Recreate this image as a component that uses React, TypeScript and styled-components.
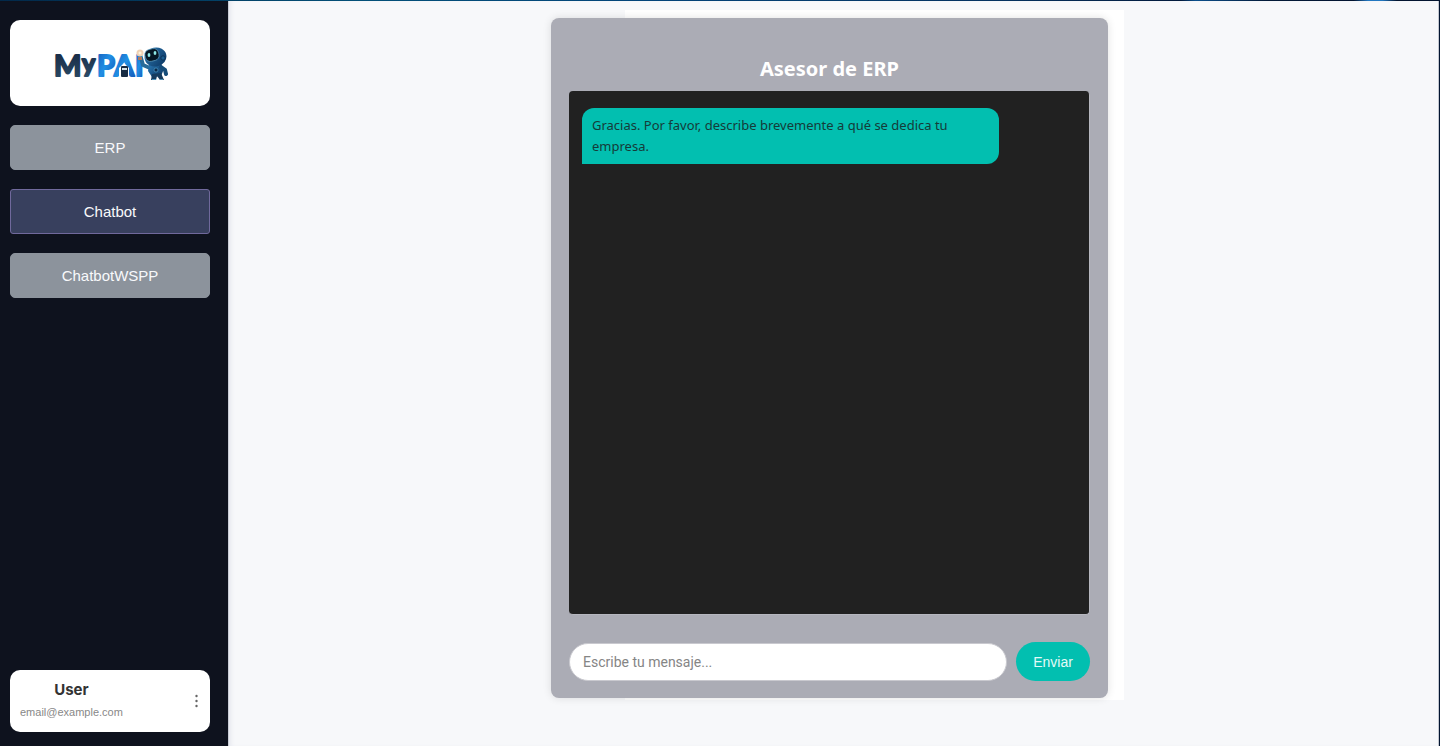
import React, { useState } from "react";
import styled, { createGlobalStyle, css } from "styled-components";

const GlobalStyle = createGlobalStyle`
  *, *::before, *::after { box-sizing: border-box; }
  html, body, #root { height: 100%; }
  body {
    margin: 0;
    background: #021a36;
    font-family: "Liberation Sans", Arial, sans-serif;
  }
`;

const Shell = styled.div`
  display: flex;
  min-height: 100%;
  padding: 1px 1px 0 0;
  background: linear-gradient(
    90deg,
    #02294a 0%,
    #035078 25%,
    #02447a 45%,
    #04315f 70%,
    #021a3c 82%,
    #0b4f8c 83%,
    #031a38 88%,
    #021430 94%,
    #2277c0 95%,
    #2277c0 96%,
    #031530 97%
  );
`;

const Sidebar = styled.aside`
  display: flex;
  flex-direction: column;
  flex: 0 0 228px;
  padding: 19px 18px 14px 10px;
  background: #0e121e;
`;

const LogoCard = styled.div`
  display: flex;
  align-items: center;
  justify-content: center;
  height: 86px;
  border-radius: 10px;
  background: #fff;
`;

const Nav = styled.nav`
  display: flex;
  flex-direction: column;
  gap: 19px;
  margin-top: 19px;
`;

const NavButton = styled.button<{ $active: boolean }>`
  height: 45px;
  padding: 0;
  border: 1px solid #8c939c;
  border-radius: 5px;
  background: #8c939c;
  color: #f8f9fb;
  font: 15px "Liberation Sans", Arial, sans-serif;
  cursor: pointer;
  ${(p) =>
    p.$active &&
    css`
      border-color: #70699c;
      border-radius: 3px;
      background: #38405e;
    `}
`;

const UserCard = styled.section`
  display: flex;
  align-items: center;
  justify-content: space-between;
  height: 62px;
  margin-top: auto;
  padding: 0 10px;
  border-radius: 10px;
  background: #fff;
`;

const UserInfo = styled.div`
  display: flex;
  flex-direction: column;
  align-items: center;
  gap: 2px;
`;

const UserName = styled.strong`
  color: #333;
  font: 700 15px/20px Inter, sans-serif;
`;

const UserEmail = styled.span`
  color: #888;
  font-size: 11px;
  line-height: 20px;
`;

const MenuButton = styled.button`
  display: flex;
  padding: 0;
  border: 0;
  background: none;
  cursor: pointer;
`;

const Main = styled.main`
  display: flex;
  flex: 1;
  align-items: flex-start;
  justify-content: center;
  padding: 9px 8px 0 0;
  border-left: 1px solid #c9cdd6;
  border-right: 1px solid #c3c7d0;
  background: #f7f8fa;
  box-shadow: inset 4px 0 4px -2px #e6e8ef;
`;

const Backdrop = styled.div`
  width: 589px;
  max-width: 100%;
  padding: 8px 16px 2px;
  background: linear-gradient(90deg, transparent 90px, #fff 90px);
`;

const ChatCard = styled.section`
  display: flex;
  flex-direction: column;
  padding: 38px 18px 17px;
  border-radius: 8px;
  background: #abacb5;
  box-shadow: 0 0 8px rgba(0, 0, 0, 0.12);
`;

const ChatTitle = styled.h1`
  margin: 0 0 9px;
  color: #fff;
  font: 700 20px/26px "Noto Sans", sans-serif;
  text-align: center;
`;

const Messages = styled.div`
  height: 524px;
  padding: 17px 13px;
  border: 1px solid #b6b7bf;
  border-width: 0 1px 1px 0;
  border-radius: 4px;
  background: #212121;
`;

const Bubble = styled.p`
  width: 417px;
  max-width: 100%;
  margin: 0;
  padding: 7px 10px;
  border-radius: 12px 12px 12px 0;
  background: #02bfb0;
  color: #153b39;
  font: 13px/21px "Noto Sans", sans-serif;
`;

const Composer = styled.form`
  display: flex;
  align-items: center;
  gap: 9px;
  margin-top: 27px;
`;

const MessageInput = styled.input`
  flex: 1;
  min-width: 0;
  height: 38px;
  padding: 0 13px;
  border: 1px solid #c9c9cf;
  border-radius: 19px;
  background: #fff;
  font: 14px Roboto, sans-serif;
  &::placeholder { color: #858585; opacity: 1; }
`;

const SendButton = styled.button`
  width: 74px;
  height: 39px;
  padding: 0;
  border: 0;
  border-radius: 20px;
  background: #02bfb0;
  color: #e2faf7;
  font: 14px "Liberation Sans", Arial, sans-serif;
  cursor: pointer;
`;

function Logo() {
  return (
    <svg width="116" height="38" viewBox="52 44 116 38" role="img" aria-label="MyPAI">
      <defs>
        <linearGradient id="navy" x1="0" y1="0" x2="0" y2="1">
          <stop offset="0" stopColor="#152640" />
          <stop offset="1" stopColor="#2c4c67" />
        </linearGradient>
        <linearGradient id="blue" x1="0" y1="0" x2="1" y2="1">
          <stop offset="0" stopColor="#1558b8" />
          <stop offset=".5" stopColor="#218fe4" />
          <stop offset="1" stopColor="#1252b3" />
        </linearGradient>
        <linearGradient id="suit" x1="0" y1="0" x2="1" y2="1">
          <stop offset="0" stopColor="#2b79b4" />
          <stop offset="1" stopColor="#0b345f" />
        </linearGradient>
      </defs>
      <g fontFamily="Lato, sans-serif" fontWeight="700" strokeLinejoin="round" strokeWidth="2">
        <g fill="url(#navy)" stroke="url(#navy)">
          <text x="54" y="76" fontSize="29">M</text>
          <text x="82" y="72" fontSize="25">y</text>
        </g>
        <g fill="url(#blue)" stroke="url(#blue)">
          <text x="97" y="76" fontSize="29">P</text>
          <text x="114" y="76" fontSize="29">A</text>
          <text x="135" y="76" fontSize="29">I</text>
        </g>
      </g>
      <path d="M119 78v-10l5-5 5 5v10z" fill="#fff" />
      <rect x="121" y="66" width="7" height="11" rx="1" fill="#182b43" />
      <rect x="122" y="68" width="5" height="2" fill="#d2e1e9" />
      <path d="M141 58l2 7 7 3" fill="none" stroke="#286b99" strokeWidth="4" strokeLinecap="round" strokeLinejoin="round" />
      <circle cx="140" cy="53" r="3.5" fill="#efd1b4" />
      <circle cx="140" cy="53" r="1.5" fill="#fff2dc" />
      <path d="M138 57h4v3h-4z" fill="#af795b" />
      <path d="M149 65l12-1 3 5-3 7-9 1-4-6z" fill="url(#suit)" />
      <path d="M161 67l4 3 1 4" fill="none" stroke="#164c78" strokeWidth="4" strokeLinecap="round" />
      <path d="M152 74l-1 6h5l1-4 3 4h4l-3-7z" fill="#153b5e" />
      <path d="M152 79.500h4m4 0h3" stroke="#4d91b8" strokeWidth="1" />
      <ellipse cx="155.500" cy="57" rx="11" ry="9.500" transform="rotate(-12 155.500 57)" fill="url(#suit)" />
      <rect x="145" y="49" width="14" height="12" rx="5" transform="rotate(-14 152 55)" fill="#061724" stroke="#5c9bbe" strokeWidth=".7" />
      <ellipse cx="149" cy="55" rx="1.400" ry="2" fill="#8de8e5" />
      <ellipse cx="155" cy="53" rx="1.400" ry="2" fill="#8de8e5" />
      <circle cx="163" cy="58" r="2.200" fill="#1b5e91" stroke="#0b3156" />
      <circle cx="156" cy="70" r="2" fill="#0b2849" stroke="#55a6cf" strokeWidth=".6" />
    </svg>
  );
}

const sections = ["ERP", "Chatbot", "ChatbotWSPP"];

export default function App() {
  const [active, setActive] = useState("Chatbot");
  const [draft, setDraft] = useState("");

  return (
    <>
      <GlobalStyle />
      <Shell>
        <Sidebar>
          <LogoCard><Logo /></LogoCard>
          <Nav>
            {sections.map((name) => (
              <NavButton key={name} type="button" $active={name === active} onClick={() => setActive(name)}>
                {name}
              </NavButton>
            ))}
          </Nav>
          <UserCard>
            <UserInfo>
              <UserName>User</UserName>
              <UserEmail>email@example.com</UserEmail>
            </UserInfo>
            <MenuButton type="button" aria-label="Menú de usuario">
              <svg width="7" height="14" viewBox="0 0 7 14" fill="#666">
                <circle cx="3.5" cy="2" r="1.2" />
                <circle cx="3.5" cy="7" r="1.2" />
                <circle cx="3.5" cy="12" r="1.2" />
              </svg>
            </MenuButton>
          </UserCard>
        </Sidebar>
        <Main>
          <Backdrop>
            <ChatCard>
              <ChatTitle>Asesor de ERP</ChatTitle>
              <Messages>
                <Bubble>Gracias. Por favor, describe brevemente a qué se dedica tu empresa.</Bubble>
              </Messages>
              <Composer onSubmit={(e) => e.preventDefault()}>
                <MessageInput
                  aria-label="Mensaje"
                  placeholder="Escribe tu mensaje..."
                  value={draft}
                  onChange={(e) => setDraft(e.target.value)}
                />
                <SendButton type="submit">Enviar</SendButton>
              </Composer>
            </ChatCard>
          </Backdrop>
        </Main>
      </Shell>
    </>
  );
}
